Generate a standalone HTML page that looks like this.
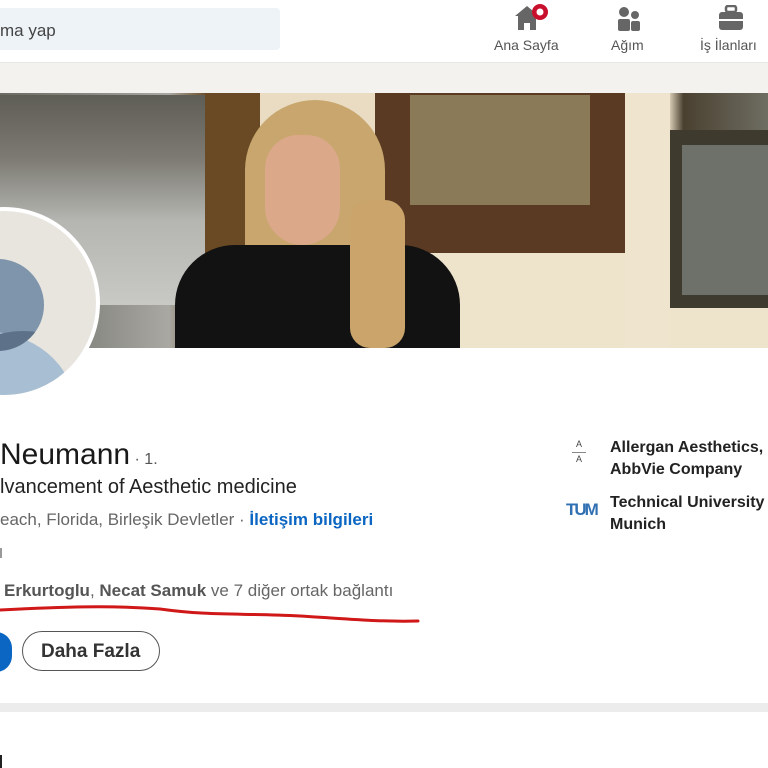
<!DOCTYPE html>
<html><head><meta charset="utf-8"><style>
*{margin:0;padding:0;box-sizing:border-box}
body{width:768px;height:768px;overflow:hidden;background:#f3f2ef;font-family:"Liberation Sans",sans-serif;position:relative}
.a{position:absolute}
.t{white-space:nowrap}
</style></head><body>
<div class="a" style="left:0;top:0;width:768px;height:63px;background:#fff;border-bottom:1px solid #e6e6e6"></div>
<div class="a" style="left:-10px;top:8px;width:290px;height:42px;background:#eef3f8;border-radius:4px"></div>
<div class="a t" style="left:0;top:21px;font-size:17px;color:#444">ma yap</div>
<svg class="a" style="left:511px;top:2px" width="42" height="30" viewBox="0 0 42 30"><path d="M4 14 L16 4 L28 14 H25 V28 H19 V21 H13 V28 H7 V14Z" fill="#666"/><circle cx="29" cy="10" r="8" fill="#c8102e"/><circle cx="29" cy="10" r="3.5" fill="#fff"/></svg>
<div class="a t" style="left:494px;top:37px;font-size:14px;color:#555">Ana Sayfa</div>
<svg class="a" style="left:616px;top:6px" width="26" height="26" viewBox="0 0 26 26"><circle cx="8" cy="6" r="5" fill="#666"/><circle cx="19" cy="9" r="4" fill="#666"/><rect x="2" y="13" width="12" height="12" rx="2" fill="#666"/><rect x="15" y="15" width="9" height="10" rx="2" fill="#666"/></svg>
<div class="a t" style="left:611px;top:37px;font-size:14px;color:#555">Ağım</div>
<svg class="a" style="left:717px;top:5px" width="28" height="26" viewBox="0 0 28 26"><rect x="9" y="1" width="10" height="6" rx="2" fill="none" stroke="#666" stroke-width="2.5"/><rect x="2" y="7" width="24" height="18" rx="3" fill="#666"/><rect x="2" y="14" width="24" height="2" fill="#fff"/></svg>
<div class="a t" style="left:700px;top:37px;font-size:14px;color:#555">İş İlanları</div>

<div class="a" style="left:0;top:93px;width:768px;height:610px;background:#fff"></div>
<div class="a" style="left:0;top:703px;width:768px;height:9px;background:#ececec"></div>
<div class="a" style="left:0;top:712px;width:768px;height:56px;background:#fff"></div>

<div class="a" style="left:0;top:93px;width:768px;height:255px;background:linear-gradient(90deg,#6c6a62 0%,#8a8a84 12%,#a9a8a2 22%,#6a4a24 27%,#c9b89a 33%,#e7dcc6 45%,#5a3a22 50%,#7a6a4a 60%,#5a3a22 80%,#efe4cd 83%,#e8dcc4 87%,#4a4030 89%,#6e6e62 100%)"></div>
<div class="a" style="left:0;top:95px;width:205px;height:210px;background:linear-gradient(180deg,#5e5d56 0%,#7c7a72 30%,#b5b6b2 60%,#c8c8c4 100%)"></div>
<div class="a" style="left:205px;top:93px;width:55px;height:255px;background:#6a4a24"></div>
<div class="a" style="left:260px;top:93px;width:115px;height:255px;background:#e9dcc2"></div>
<div class="a" style="left:375px;top:93px;width:250px;height:160px;background:#5a3a22"></div>
<div class="a" style="left:410px;top:95px;width:180px;height:110px;background:#8a7a58"></div>
<div class="a" style="left:375px;top:253px;width:250px;height:95px;background:#eee3cb"></div>
<div class="a" style="left:625px;top:93px;width:45px;height:255px;background:#efe4cd"></div>
<div class="a" style="left:670px;top:130px;width:98px;height:178px;background:#3e3a2e"></div>
<div class="a" style="left:682px;top:145px;width:86px;height:150px;background:#6e706a"></div>
<div class="a" style="left:670px;top:308px;width:98px;height:40px;background:#eee3cb"></div>
<div class="a" style="left:245px;top:100px;width:140px;height:248px;background:#c8a66e;border-radius:70px 70px 10px 10px"></div>
<div class="a" style="left:175px;top:245px;width:285px;height:103px;background:#121212;border-radius:60px 60px 0 0"></div>
<div class="a" style="left:265px;top:135px;width:75px;height:110px;background:#dba889;border-radius:40px 40px 45px 45px"></div>
<div class="a" style="left:350px;top:200px;width:55px;height:148px;background:#caa46a;border-radius:20px"></div>

<div class="a" style="left:-92px;top:207px;width:192px;height:192px;border-radius:50%;background:#fff"></div>
<div class="a" style="left:-88px;top:211px;width:184px;height:184px;border-radius:50%;background:#e8e5df;overflow:hidden">
 <div class="a" style="left:40px;top:48px;width:92px;height:92px;border-radius:50%;background:#7e95ab"></div>
 <div class="a" style="left:-20px;top:120px;width:182px;height:150px;border-radius:50%;background:#a8bed3"></div>
 <div class="a" style="left:40px;top:48px;width:92px;height:92px;border-radius:50%;background:#5d7288;clip-path:circle(91px at 71px 163px)"></div>
</div>

<div class="a t" style="left:0;top:438px;font-size:30px;color:#191919">Neumann<span style="font-size:16px;color:#555"> · 1.</span></div>
<div class="a t" style="left:0;top:476px;font-size:20px;color:#222">lvancement of Aesthetic medicine</div>
<div class="a t" style="left:0;top:510px;font-size:17px;color:#666">each, Florida, Birleşik Devletler · <b style="color:#0a66c2">İletişim bilgileri</b></div>
<div class="a" style="left:0;top:548px;width:2px;height:10px;background:#999"></div>
<div class="a t" style="left:4px;top:581px;font-size:17px;color:#666"><b style="color:#555">Erkurtoglu</b>, <b style="color:#555">Necat Samuk</b> ve 7 diğer ortak bağlantı</div>
<svg class="a" style="left:0;top:600px" width="430" height="26"><path d="M0 10 C60 7 110 5 160 9 C210 16 240 13 300 16 C350 19 380 22 418 21" fill="none" stroke="#d01818" stroke-width="3" stroke-linecap="round"/></svg>
<div class="a" style="left:-20px;top:632px;width:32px;height:40px;border-radius:20px;background:#0a66c2"></div>
<div class="a" style="left:22px;top:631px;width:138px;height:40px;border-radius:20px;border:1.5px solid #555"></div>
<div class="a t" style="left:41px;top:641px;font-size:19px;color:#333;font-weight:bold">Daha Fazla</div>

<div class="a t" style="left:572px;top:438px;font-size:9px;color:#444;line-height:12px;text-align:center;width:14px">A<br><span style="display:block;border-top:1px solid #888;margin:2px 0">A</span></div>
<div class="a t" style="left:610px;top:437px;font-size:16px;color:#222;font-weight:bold;line-height:22px">Allergan Aesthetics,<br>AbbVie Company</div>
<div class="a t" style="left:566px;top:500px;font-size:17px;color:#3070b3;font-weight:bold;letter-spacing:-2px">TUM</div>
<div class="a t" style="left:610px;top:492px;font-size:16px;color:#222;font-weight:bold;line-height:22px">Technical University<br>Munich</div>
<div class="a" style="left:0;top:755px;width:2px;height:13px;background:#222"></div>
</body></html>
